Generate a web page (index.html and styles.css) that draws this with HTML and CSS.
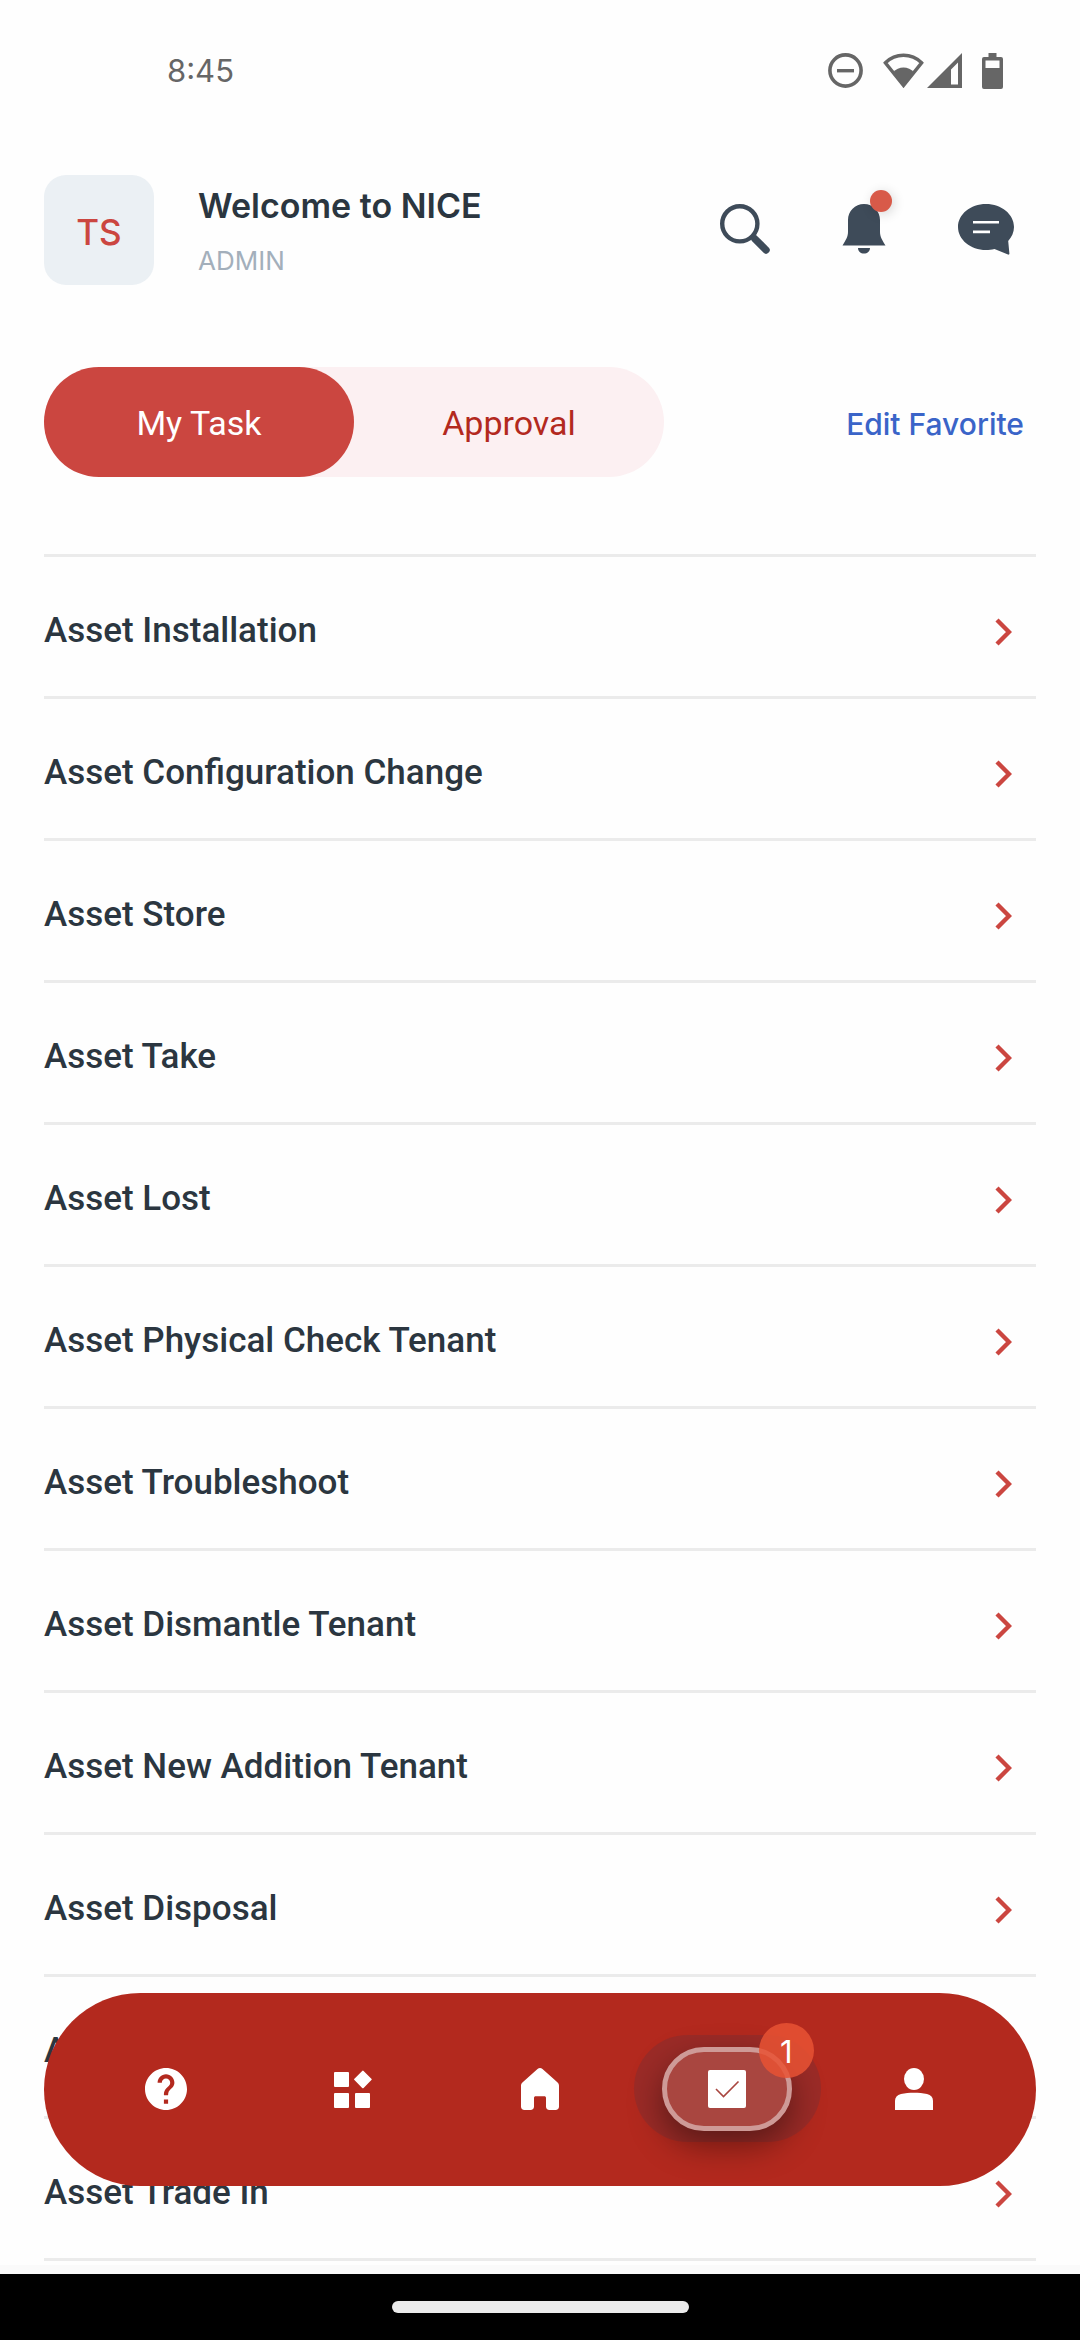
FILE: index.html
```html
<!DOCTYPE html>
<html lang="en">
<head>
<meta charset="utf-8">
<meta name="viewport" content="width=device-width, initial-scale=1">
<title>My Task</title>
<link rel="stylesheet" href="styles.css">
</head>
<body>
<svg class="symbols" aria-hidden="true">
  <symbol id="chevron" viewBox="0 0 17 28"><path d="M2 2l12 12L2 26" fill="none" stroke="currentColor" stroke-width="4.4"/></symbol>
</svg>

<div class="status-bar">
  <span class="clock">8:45</span>
  <div class="status-icons">
    <svg width="35" height="35" viewBox="0 0 35 35"><circle cx="17.500" cy="17.500" r="15.600" fill="none" stroke="currentColor" stroke-width="3.600"/><path d="M9 16h17v3.400H9z" fill="currentColor"/></svg>
    <div class="signal">
      <svg width="41" height="35" viewBox="0 0 41 35"><path d="M20.500 32.500L2.400 9.800C12.500-.2 28.500-.2 38.600 9.800z" fill="none" stroke="currentColor" stroke-width="3.400"/><path d="M20.500 33L10 19.500c5.500-6.800 15.500-6.800 21 0z" fill="currentColor"/></svg>
      <svg width="35" height="35" viewBox="0 0 35 35"><path fill-rule="evenodd" d="M35 0v35H0zM31 9.500l-7 7V31.500h7z" fill="currentColor"/></svg>
    </div>
    <svg width="21" height="36" viewBox="0 0 21 36"><path fill-rule="evenodd" d="M6.500 0h8v4H19a2 2 0 0 1 2 2v28a2 2 0 0 1-2 2H2a2 2 0 0 1-2-2V6a2 2 0 0 1 2-2h4.500zM3.500 7.500v7.500h14V7.500z" fill="currentColor"/></svg>
  </div>
</div>

<header class="header">
  <div class="avatar">TS</div>
  <div class="greeting">
    <h1 class="title">Welcome to NICE</h1>
    <p class="role">ADMIN</p>
  </div>
  <div class="actions">
    <button class="icon-button" type="button" aria-label="Search">
      <svg width="50" height="50" viewBox="0 0 50 50" fill="none" stroke="currentColor"><circle cx="19.800" cy="19.800" r="17.600" stroke-width="4.400"/><path d="M33 33l1 1" stroke-width="5"/><path d="M35 35l11 11" stroke-width="7.400" stroke-linecap="round"/></svg>
    </button>
    <button class="icon-button" type="button" aria-label="Notifications">
      <svg width="44" height="50" viewBox="0 0 44 50" fill="currentColor"><path d="M22 0c9 0 16 7 16 16v12c0 5 2.500 8.500 5.500 13.600H.5C3.500 36.500 6 33 6 28V16C6 7 13 0 22 0zM16 44h12c0 3.500-2.700 5.600-6 5.600S16 47.500 16 44z"/></svg>
      <span class="dot"></span>
    </button>
    <button class="icon-button" type="button" aria-label="Messages">
      <svg width="56" height="51" viewBox="0 0 56 51"><path d="M28 0c15.500 0 28 10.300 28 23 0 5-2.200 10-5.800 14l1.200 12.600c.1 1-.6 1.300-1.400 1L36.500 45C33.500 45.700 31 46 28 46 12.500 46 0 35.700 0 23S12.500 0 28 0z" fill="currentColor"/><path d="M15 17h26v2.600H15zM15 26.600h17v2.600H15z" fill="#fff"/></svg>
    </button>
  </div>
</header>

<main class="content">
  <div class="toolbar">
    <div class="tabs" role="tablist">
      <button class="tab tab-active" type="button" role="tab" aria-selected="true">My Task</button>
      <button class="tab" type="button" role="tab" aria-selected="false">Approval</button>
    </div>
    <a class="edit" href="#">Edit Favorite</a>
  </div>

  <nav class="tasks" aria-label="Tasks">
    <a class="task" href="#">Asset Installation<svg class="chevron"><use href="#chevron"/></svg></a>
    <a class="task" href="#">Asset Configuration Change<svg class="chevron"><use href="#chevron"/></svg></a>
    <a class="task" href="#">Asset Store<svg class="chevron"><use href="#chevron"/></svg></a>
    <a class="task" href="#">Asset Take<svg class="chevron"><use href="#chevron"/></svg></a>
    <a class="task" href="#">Asset Lost<svg class="chevron"><use href="#chevron"/></svg></a>
    <a class="task" href="#">Asset Physical Check Tenant<svg class="chevron"><use href="#chevron"/></svg></a>
    <a class="task" href="#">Asset Troubleshoot<svg class="chevron"><use href="#chevron"/></svg></a>
    <a class="task" href="#">Asset Dismantle Tenant<svg class="chevron"><use href="#chevron"/></svg></a>
    <a class="task" href="#">Asset New Addition Tenant<svg class="chevron"><use href="#chevron"/></svg></a>
    <a class="task" href="#">Asset Disposal<svg class="chevron"><use href="#chevron"/></svg></a>
    <a class="task" href="#">Asset<svg class="chevron"><use href="#chevron"/></svg></a>
    <a class="task" href="#">Asset Trade In<svg class="chevron"><use href="#chevron"/></svg></a>
  </nav>
</main>

<nav class="bottom-nav" aria-label="Main">
  <a class="nav-item" href="#" aria-label="Help">
    <svg width="42" height="42" viewBox="2 2 20 20" fill="currentColor"><path d="M12 2C6.480 2 2 6.480 2 12s4.480 10 10 10 10-4.480 10-10S17.520 2 12 2zm1 17h-2v-2h2v2zm2.070-7.750l-.9.920C13.450 12.900 13 13.500 13 15h-2v-.5c0-1.100.45-2.100 1.170-2.830l1.240-1.260c.37-.36.59-.86.59-1.410 0-1.100-.9-2-2-2s-2 .9-2 2H8c0-2.210 1.790-4 4-4s4 1.790 4 4c0 .88-.36 1.680-.93 2.250z"/></svg>
  </a>
  <a class="nav-item" href="#" aria-label="Apps">
    <svg width="38" height="38" viewBox="0 0 38 38" fill="currentColor"><rect y="2" width="15" height="15" rx="1"/><rect y="23" width="15" height="15" rx="1"/><rect x="21" y="23" width="15" height="15" rx="1"/><rect x="22.400" y="2.900" width="13" height="13" rx="1" transform="rotate(45 28.900 9.400)"/></svg>
  </a>
  <a class="nav-item" href="#" aria-label="Home">
    <svg width="38" height="42" viewBox="0 0 38 42" fill="currentColor"><path d="M16.500.9c1.500-1.200 3.500-1.200 5 0L36.300 14.200c1.100.9 1.700 2 1.700 3.600V38.500c0 2.200-1.300 3.500-3.500 3.500h-6c-2.200 0-3.500-1.300-3.500-3.500V30c0-1.200-.6-1.800-1.800-1.800h-8.400c-1.200 0-1.800.6-1.800 1.800v8.500c0 2.200-1.300 3.500-3.500 3.500h-6C1.300 42 0 40.700 0 38.500V17.800c0-1.600.6-2.700 1.700-3.600z"/></svg>
  </a>
  <a class="nav-item nav-current" href="#" aria-label="Tasks" aria-current="page">
    <span class="nav-pill">
      <svg width="38" height="38" viewBox="0 0 38 38"><rect width="38" height="38" rx="2" fill="#fff"/><path d="M8 19l7.500 7.500L30.500 11.500" fill="none" stroke="#a94640" stroke-width="1.600"/></svg>
    </span>
    <span class="badge">1</span>
  </a>
  <a class="nav-item" href="#" aria-label="Profile">
    <svg width="38" height="42" viewBox="0 0 38 42" fill="currentColor"><ellipse cx="19" cy="11" rx="10" ry="11"/><path d="M0 42V33c0-3.500 2-6 6-7 8-1.700 18-1.700 26 0 4 1 6 3.500 6 7v9z"/></svg>
  </a>
</nav>

<footer class="system-bar"><span class="handle"></span></footer>
</body>
</html>
```
FILE: styles.css
```css
* {
  box-sizing: border-box;
}

body {
  display: flex;
  flex-direction: column;
  min-height: 100vh;
  margin: 0;
  background: #fefefe;
  color: #2b3640;
  font-family: Roboto, sans-serif;
}

svg {
  display: block;
}

.symbols {
  position: absolute;
  width: 0;
  height: 0;
}

a {
  color: inherit;
  text-decoration: none;
}

button {
  padding: 0;
  border: 0;
  background: none;
  color: inherit;
  font: inherit;
}

/* Status bar */
.status-bar {
  display: flex;
  align-items: center;
  justify-content: space-between;
  height: 141px;
  padding: 0 77px 0 167px;
  color: #666;
}

.clock {
  font-family: Inter, sans-serif;
  font-size: 31px;
}

.status-icons {
  display: flex;
  align-items: center;
  gap: 20px;
}

.signal {
  display: flex;
  gap: 3px;
}

/* Header */
.header {
  display: flex;
  align-items: center;
  margin-top: 34px;
  padding: 0 66px 0 44px;
  font-family: Inter, sans-serif;
}

.avatar {
  display: grid;
  place-items: center;
  width: 110px;
  height: 110px;
  padding-top: 4px;
  border-radius: 22px;
  background: #ebf0f4;
  color: #cb4640;
  font-size: 35px;
  font-weight: 500;
}

.greeting {
  flex: 1;
  margin-left: 44px;
}

.title,
.role {
  margin: 0;
}

.title {
  font-size: 34px;
  font-weight: 600;
  line-height: 62px;
}

.role {
  color: #a3afbb;
  font-size: 26px;
  line-height: 48px;
}

.actions {
  display: flex;
  align-items: center;
  gap: 72px;
  padding-bottom: 2px;
  color: #3e4b59;
}

.icon-button {
  position: relative;
}

.dot {
  position: absolute;
  top: -14px;
  right: -6px;
  width: 22px;
  height: 22px;
  border-radius: 50%;
  background: #d85a49;
  box-shadow: 2px 2px 12px rgba(0, 0, 0, 0.16);
}

/* Tabs */
.content {
  flex: 1;
  padding: 82px 44px 0;
}

.toolbar {
  display: flex;
  align-items: center;
  justify-content: space-between;
  padding-right: 12px;
}

.tabs {
  display: flex;
  border-radius: 55px;
  background: #fcf0f2;
}

.tab {
  width: 310px;
  height: 110px;
  padding-top: 2px;
  border-radius: 55px;
  color: #b3291e;
  font-size: 34px;
}

.tab-active {
  background: #cb4640;
  color: #fff;
}

.edit {
  padding-top: 4px;
  color: #3a64c8;
  font-family: Inter, sans-serif;
  font-size: 30px;
  font-weight: 500;
}

/* Task list */
.tasks {
  margin-top: 77px;
  border-top: 3px solid #ebebeb;
}

.task {
  display: flex;
  align-items: center;
  justify-content: space-between;
  height: 142px;
  padding: 8px 24px 0 0;
  border-bottom: 3px solid #ebebeb;
  font-size: 35px;
  font-weight: 500;
}

.chevron {
  width: 17px;
  height: 28px;
  margin-top: 3px;
  color: #cb4640;
}

/* Floating navigation */
.bottom-nav {
  position: fixed;
  right: 44px;
  bottom: 154px;
  left: 44px;
  display: flex;
  align-items: center;
  height: 193px;
  padding: 0 28px 2px;
  border-radius: 97px;
  background: #b3291e;
  color: #fff;
}

.nav-item {
  position: relative;
  display: flex;
  flex: 1;
  align-items: center;
  justify-content: center;
  height: 107px;
}

.nav-current {
  border-radius: 54px;
  background: rgba(112, 48, 56, 0.35);
}

.nav-pill {
  display: grid;
  place-items: center;
  width: 130px;
  height: 84px;
  border: 5px solid #ce9a97;
  border-radius: 42px;
  background: #a94640;
  box-shadow: 0 14px 34px rgba(0, 0, 0, 0.42);
}

.badge {
  position: absolute;
  top: -12px;
  right: 7px;
  width: 55px;
  height: 55px;
  border-radius: 50%;
  background: rgba(232, 82, 52, 0.85);
  font-family: Inter, sans-serif;
  font-size: 31px;
  line-height: 57px;
  text-align: center;
}

/* System gesture bar */
.system-bar {
  display: flex;
  align-items: center;
  justify-content: center;
  height: 75px;
  border-top: 9px solid #fafafa;
  background: #000;
}

.handle {
  width: 297px;
  height: 12px;
  border-radius: 6px;
  background: #ebebeb;
}
```
